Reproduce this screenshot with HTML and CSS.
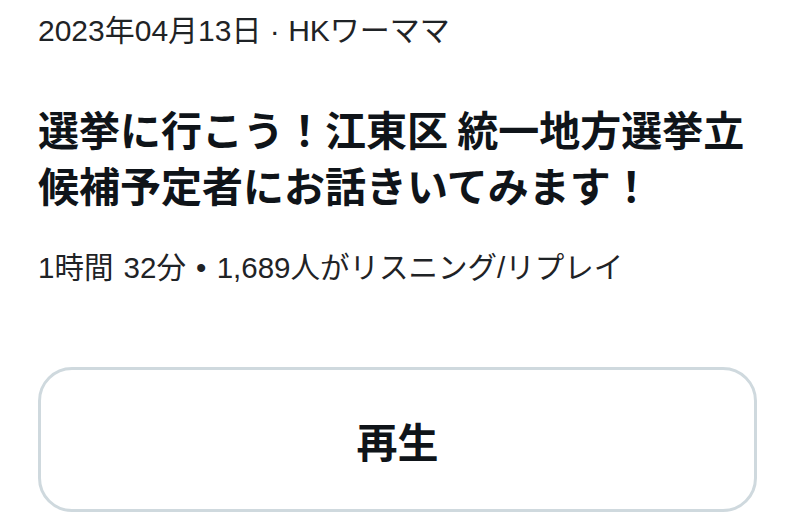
FILE: index.html
```html
<!DOCTYPE html>
<html lang="ja">
<head>
<meta charset="utf-8">
<link rel="stylesheet" href="styles.css">
</head>
<body>
<div class="card">
  <div class="meta">2023年04月13日 · HKワーママ</div>
  <h1 class="title">選挙に行こう！江東区 統一地方選挙立候補予定者にお話きいてみます！</h1>
  <div class="stats">1時間 32分 • 1,689人がリスニング/リプレイ</div>
  <button class="play">再生</button>
</div>
</body>
</html>
```
FILE: styles.css
```css
html, body {
  margin: 0;
  padding: 0;
  background: #ffffff;
}
.card {
  padding: 11px 31px 0 38px;
  font-family: "Liberation Sans", "Noto Sans CJK JP", sans-serif;
  color: #0f1419;
  display: flex;
  flex-direction: column;
}
.meta {
  font-size: 30px;
  line-height: 40px;
  color: #1f2326;
}
.title {
  margin: 49px 0 0 0;
  font-size: 41px;
  line-height: 56px;
  font-weight: 700;
  font-family: "Noto Sans CJK JP", sans-serif;
  color: #0f1419;
}
.stats {
  margin-top: 36px;
  font-size: 29.5px;
  line-height: 40px;
  color: #1f2326;
  word-spacing: 2px;
}
.play {
  margin-top: 79px;
  height: 145px;
  border: 3px solid #cfd9de;
  border-radius: 34px;
  background: #ffffff;
  font-family: "Noto Sans CJK JP", sans-serif;
  font-size: 41px;
  font-weight: 700;
  color: #0f1419;
  padding: 0;
}
```
